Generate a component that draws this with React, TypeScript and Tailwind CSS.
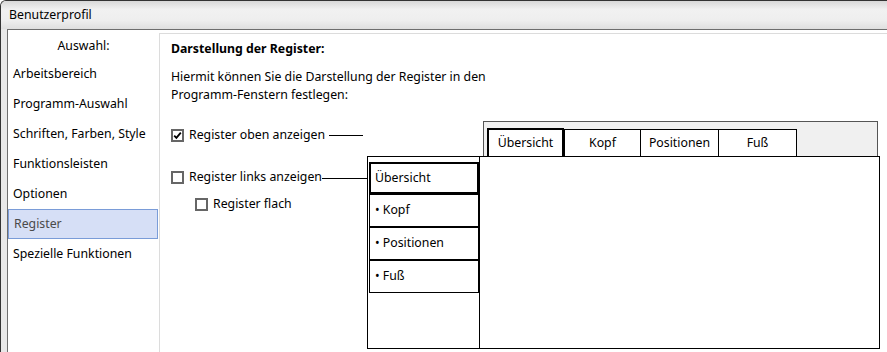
import React from "react";

const font = { fontFamily: "'Noto Sans', 'Open Sans', sans-serif" };

function Check({ checked }: { checked?: boolean }) {
  return (
    <div className="w-[13px] h-[13px] border-2 border-[#666666] bg-white flex items-center justify-center shrink-0">
      {checked && (
        <svg width="9" height="9" viewBox="0 0 9 9">
          <path d="M1.2 4.6 L3.4 6.9 L7.8 1.6" stroke="#000" strokeWidth="1.8" fill="none" />
        </svg>
      )}
    </div>
  );
}

const navItems = [
  "Arbeitsbereich",
  "Programm-Auswahl",
  "Schriften, Farben, Style",
  "Funktionsleisten",
  "Optionen",
  "Register",
  "Spezielle Funktionen",
];

export default function App() {
  return (
    <div
      className="w-[887px] h-[352px] overflow-hidden bg-[#e8e8e8] border-l border-t border-[#333333] rounded-tl-[6px] flex flex-col text-[12.3px] text-black"
      style={font}
    >
      {/* Title bar */}
      <div className="h-[28px] shrink-0 flex items-center pl-[8px] bg-[linear-gradient(180deg,#d8d8d8_0%,#f1f1f1_30%,#eeeeee_70%,#dfdfdf_100%)]">
        <span className="leading-[18px]">Benutzerprofil</span>
      </div>
      {/* Client */}
      <div className="flex-1 ml-[6px] border-l border-t border-[#6e6e6e] bg-white flex">
        {/* Left nav */}
        <div className="w-[151px] shrink-0 flex flex-col pt-[7px]">
          <div className="h-[18px] leading-[18px] text-center">Auswahl:</div>
          <div className="mt-[4px] flex flex-col">
            {navItems.map((item) =>
              item === "Register" ? (
                <div
                  key={item}
                  className="w-[150px] h-[30px] border border-[#7a9cd8] bg-[#d6dff6] flex items-center pl-[5px] text-[#4a4a4a]"
                >
                  {item}
                </div>
              ) : (
                <div key={item} className="h-[30px] flex items-center pl-[5px] whitespace-nowrap">
                  {item}
                </div>
              )
            )}
          </div>
        </div>
        {/* Right panel */}
        <div className="flex-1 mt-[3px] border-l border-t border-[#dcdcdc] pl-[11px] pt-[6px] flex flex-col">
          <div className="h-[18px] leading-[18px] font-bold">Darstellung der Register:</div>
          <div className="mt-[10px] leading-[18px]">
            Hiermit können Sie die Darstellung der Register in den
            <br />
            Programm-Fenstern festlegen:
          </div>
          <div className="mt-[17px] flex">
            {/* Options */}
            <div className="w-[196px] shrink-0 flex flex-col pt-[5px]">
              <div className="h-[18px] flex items-center">
                <Check checked />
                <span className="ml-[5px] whitespace-nowrap">Register oben anzeigen</span>
                <div className="flex-1 h-px bg-black ml-[4px] mr-[4px] mt-[1px]" />
              </div>
              <div className="mt-[24px] h-[18px] flex items-center">
                <Check />
                <span className="ml-[5px] whitespace-nowrap">Register links anzeigen</span>
                <div className="flex-1 h-px bg-black mt-[2px]" />
              </div>
              <div className="mt-[9px] h-[18px] flex items-center pl-[24px]">
                <Check />
                <span className="ml-[5px] whitespace-nowrap">Register flach</span>
              </div>
            </div>
            {/* Preview */}
            <div className="w-[513px] shrink-0 flex flex-col">
              <div className="ml-[116px] w-[395px] h-[35px] border-l border-t border-r border-[#555555] bg-[#f0f0f0] flex items-end pl-[3px]">
                <div className="w-[77px] h-[28px] border-2 border-b-0 border-black bg-white flex items-center justify-center">
                  Übersicht
                </div>
                <div className="w-[77px] h-[27px] border border-b-0 border-black bg-white flex items-center justify-center">
                  Kopf
                </div>
                <div className="w-[78px] h-[27px] border border-b-0 border-l-0 border-black bg-white flex items-center justify-center">
                  Positionen
                </div>
                <div className="w-[78px] h-[27px] border border-b-0 border-l-0 border-black bg-white flex items-center justify-center">
                  Fuß
                </div>
              </div>
              <div className="h-[193px] border border-black bg-white flex">
                <div className="w-[112px] shrink-0 border-r border-black flex flex-col pt-[5px] pl-[1px]">
                  <div className="w-[110px] h-[32px] border-2 border-black flex items-center pl-[4px]">
                    Übersicht
                  </div>
                  <div className="w-[110px] h-[33px] border border-black flex items-center pl-[5px]">
                    • Kopf
                  </div>
                  <div className="w-[110px] h-[33px] border border-black flex items-center pl-[5px]">
                    • Positionen
                  </div>
                  <div className="w-[110px] h-[33px] border border-black flex items-center pl-[5px]">
                    • Fuß
                  </div>
                </div>
                <div className="flex-1" />
              </div>
            </div>
          </div>
        </div>
      </div>
    </div>
  );
}
